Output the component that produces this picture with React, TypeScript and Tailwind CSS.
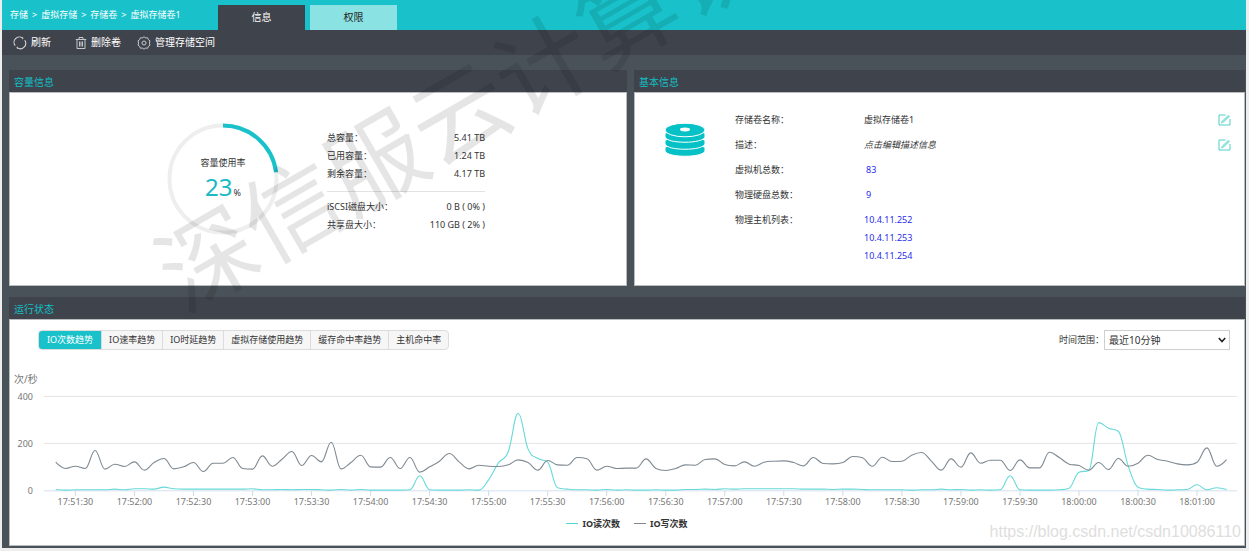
import { useState } from "react";
import type { ReactNode } from "react";

const WRITE = [
  247, 266, 259, 266, 212, 268, 253, 260, 246, 271, 248, 236, 267, 261, 248, 275, 250, 250, 233, 266,
  268, 228, 259, 238, 215, 257, 227, 246, 187, 267, 248, 226, 261, 262, 233, 266, 233, 277, 261, 244,
  221, 246, 267, 256, 259, 260, 255, 240, 248, 271, 242, 255, 256, 233, 237, 271, 259, 266, 265, 265,
  237, 266, 272, 266, 255, 256, 239, 237, 254, 258, 246, 259, 247, 244, 243, 248, 258, 233, 251, 252,
  248, 230, 234, 259, 232, 245, 244, 226, 218, 244, 271, 237, 262, 219, 250, 241, 241, 272, 240, 264,
  264, 217, 233, 253, 257, 271, 248, 269, 236, 259, 250, 226, 239, 244, 252, 255, 247, 204, 259, 239,
];

const READ = [
  329, 331, 330, 330, 330, 330, 328, 330, 327, 327, 328, 322, 327, 328, 328, 328, 328, 328, 328, 328,
  327, 330, 330, 329, 330, 329, 329, 330, 331, 329, 331, 329, 331, 331, 331, 331, 330, 288, 330, 331,
  331, 331, 330, 331, 300, 249, 215, 100, 207, 236, 247, 324, 328, 330, 330, 331, 329, 331, 330, 331,
  331, 330, 331, 331, 329, 329, 328, 329, 327, 328, 327, 327, 327, 327, 327, 327, 328, 328, 328, 329,
  328, 328, 329, 330, 330, 330, 330, 331, 330, 330, 328, 330, 329, 331, 330, 331, 330, 288, 330, 331,
  331, 331, 330, 325, 277, 272, 128, 145, 154, 258, 322, 328, 329, 331, 330, 329, 315, 330, 324, 329,
];

const TIMES = [
  "17:51:30", "17:52:00", "17:52:30", "17:53:00", "17:53:30", "17:54:00", "17:54:30",
  "17:55:00", "17:55:30", "17:56:00", "17:56:30", "17:57:00", "17:57:30", "17:58:00",
  "17:58:30", "17:59:00", "17:59:30", "18:00:00", "18:00:30", "18:01:00",
];

const STEP = 9.855;

// Smoothed line whose control points never overshoot a neighbouring sample.
function spline(values: number[]) {
  const pts = values.map((v, i) => ({ x: 45.8 + STEP * i, y: v / 3 + 10 }));
  let d = `M${pts[0].x} ${pts[0].y}`;
  let right = { ...pts[0] };
  for (let i = 1; i < pts.length; i++) {
    const last = pts[i - 1];
    const p = pts[i];
    const next = pts[i + 1];
    let lx = p.x;
    let ly = p.y;
    let rx = p.x;
    let ry = p.y;
    if (next) {
      lx = (1.5 * p.x + last.x) / 2.5;
      ly = (1.5 * p.y + last.y) / 2.5;
      rx = (1.5 * p.x + next.x) / 2.5;
      ry = (1.5 * p.y + next.y) / 2.5;
      const fix = ((ry - ly) * (rx - p.x)) / (rx - lx) + p.y - ry;
      ly += fix;
      ry += fix;
      if (ly > last.y && ly > p.y) {
        ly = Math.max(last.y, p.y);
        ry = 2 * p.y - ly;
      } else if (ly < last.y && ly < p.y) {
        ly = Math.min(last.y, p.y);
        ry = 2 * p.y - ly;
      }
      if (ry > next.y && ry > p.y) {
        ry = Math.max(next.y, p.y);
        ly = 2 * p.y - ry;
      } else if (ry < next.y && ry < p.y) {
        ry = Math.min(next.y, p.y);
        ly = 2 * p.y - ry;
      }
    }
    d += `C${right.x} ${right.y} ${lx} ${ly} ${p.x} ${p.y}`;
    right = { x: rx, y: ry };
  }
  return d;
}

function Chart() {
  return (
    <svg viewBox="0 0 1236 142" className="block h-auto w-full" role="img" aria-label="IO次数趋势">
      {[400, 200, 0].map((v, i) => (
        <g key={v}>
          <path d={`M34 ${26.5 + 47 * i + (i === 2 ? 0.5 : 0)}H1229`} stroke={v ? "#e4e4e4" : "#d4dfee"} fill="none" />
          <text x="23" y={30 + 47 * i} textAnchor="end" className="fill-[#777] text-[9px]">{v}</text>
        </g>
      ))}
      {TIMES.map((t, i) => (
        <g key={t}>
          <path d={`M${65.5 + STEP * 6 * i} 121v5`} stroke="#cfdaea" />
          <text x={65.5 + STEP * 6 * i} y="135" textAnchor="middle" className="fill-[#777] text-[9px]">{t}</text>
        </g>
      ))}
      <path d={spline(READ)} fill="none" stroke="#66d9d8" strokeWidth="1.1" />
      <path d={spline(WRITE)} fill="none" stroke="#7f8a93" strokeWidth="1.1" />
    </svg>
  );
}

function Panel({ title, children }: { title: string; children: ReactNode }) {
  return (
    <section className="flex min-w-0 flex-col">
      <h2 className="h-[22px] bg-[#3f434c] pl-[5px] text-[10px] leading-6 text-[#12bfc4]">{title}</h2>
      <div className="grow border border-[#b9bcbf] bg-white">{children}</div>
    </section>
  );
}

function RefreshIcon() {
  return (
    <svg viewBox="0 0 14 14" className="size-[14px]" fill="none" stroke="#d5d7d9" strokeWidth="1.1">
      <path d="M2.2 9.6A5.3 5.3 0 0 1 9.6 2.1M11.7 4.3A5.3 5.3 0 0 1 4.2 11.6" />
      <path d="M9.400 1.200l.8 1.200-1.200.6M4.600 12.800l-.8-1.200 1.200-.6" strokeWidth=".8" />
    </svg>
  );
}

function TrashIcon() {
  return (
    <svg viewBox="0 0 12 14" className="h-[14px] w-3" fill="none" stroke="#d5d7d9">
      <path d="M.8 3.5h10.4M4 3.3V1.5h4v1.8M2 3.7v8.8h8V3.7M4.5 5.5v5M6 5.5v5M7.5 5.5v5" strokeWidth=".9" />
    </svg>
  );
}

function GearIcon() {
  return (
    <svg viewBox="0 0 14 14" className="size-[14px]" fill="none" stroke="#d5d7d9" strokeWidth=".9">
      <path d="M7 .8l1.6 1.1 2-.1.8 1.8 1.6 1.3-.6 2.1.6 2.1-1.6 1.3-.8 1.8-2-.1L7 13.2l-1.6-1.1-2 .1-.8-1.8L1 9.1 1.6 7 1 4.9l1.6-1.3.8-1.8 2 .1z" />
      <circle cx="7" cy="7" r="2" />
    </svg>
  );
}

function EditIcon() {
  return (
    <svg viewBox="0 0 13 12" className="h-3 w-[13px]" fill="none">
      <path d="M7.500 1H1v10h11V5" stroke="#4fcfc9" />
      <path d="M3.200 9.200l1-2.200L10.200 1.200l1.600 1.200-6 5.700z" fill="#9be3df" stroke="#5ed2cd" strokeWidth=".5" />
    </svg>
  );
}

function DiskIcon() {
  return (
    <svg viewBox="0 0 40 34" className="h-[34px] w-10 shrink-0">
      <g fill="#06c1c5" stroke="#fff" strokeWidth="1">
        <path d="M0 24.5C3 21 37 21 40 24.5V28C38 35 2 35 0 28z" />
        <path d="M0 17.5C3 14 37 14 40 17.5V21C38 28 2 28 0 21z" />
        <path d="M0 10.500C3 7 37 7 40 10.500V14C38 21 2 21 0 14z" />
        <ellipse cx="20" cy="7" rx="20" ry="6.800" />
      </g>
      <ellipse cx="20" cy="6.500" rx="5" ry="1.900" fill="#fff" />
    </svg>
  );
}

function Stat({ label, value }: { label: string; value: string }) {
  return (
    <div className="flex justify-between">
      <dt>{label}</dt>
      <dd>{value}</dd>
    </div>
  );
}

function Row({ label, edit, children }: { label: string; edit?: string; children: ReactNode }) {
  return (
    <div className="flex items-start">
      <dt className="w-[129px] shrink-0">{label}</dt>
      <dd className="grow">{children}</dd>
      {edit && (
        <button type="button" aria-label={edit} className="mt-[3px]">
          <EditIcon />
        </button>
      )}
    </div>
  );
}

const TRENDS = ["IO次数趋势", "IO速率趋势", "IO时延趋势", "虚拟存储使用趋势", "缓存命中率趋势", "主机命中率"];

export default function App() {
  const [trend, setTrend] = useState(0);
  return (
    <div className="relative min-h-screen overflow-hidden bg-[#eeeeef] pr-[3px] pb-[3px] pl-[2px] font-['Noto_Sans','Noto_Sans_CJK_SC',sans-serif] text-[9px] text-[#333]">
      <div className="bg-[#4a5259]">
        <header className="flex h-[30px] items-end bg-[#19c2ca] text-white">
          <nav aria-label="路径" className="flex w-[216px] shrink-0 gap-1 self-center pl-2">
            <a href="#storage">存储</a>
            <span>&gt;</span>
            <a href="#virtual">虚拟存储</a>
            <span>&gt;</span>
            <a href="#volumes">存储卷</a>
            <span>&gt;</span>
            <a href="#volume1">虚拟存储卷1</a>
          </nav>
          <div className="flex gap-[5px] text-[10px]">
            <button type="button" className="h-[25px] w-[87px] bg-[#3f434c]">信息</button>
            <button type="button" className="h-[25px] w-[87px] bg-[#8be2e3] text-[#222]">权限</button>
          </div>
        </header>
        <div className="flex h-[25px] items-center bg-[#3f434c] pl-[11px] text-[10px] text-white">
          <button type="button" className="mr-6 flex items-center gap-1"><RefreshIcon />刷新</button>
          <button type="button" className="mr-4 flex items-center gap-1"><TrashIcon />删除卷</button>
          <button type="button" className="flex items-center gap-1"><GearIcon />管理存储空间</button>
        </div>

        <main className="flex flex-col gap-[11px] pt-[15px] pr-px pb-[2px] pl-[7px]">
          <div className="grid grid-cols-[618fr_611fr] gap-[7px]">
            <Panel title="容量信息">
              <div className="flex h-[192px] items-start pt-[30px] pl-[157px]">
                <div className="relative size-[112px] shrink-0">
                  <svg viewBox="0 0 112 112" className="size-full" fill="none" strokeWidth="4">
                    <circle cx="56" cy="56" r="53.500" stroke="#eeeeee" />
                    <circle cx="56" cy="56" r="53.500" stroke="#19c2ca" pathLength="100" strokeDasharray="23 77" transform="rotate(-90 56 56)" />
                  </svg>
                  <div className="absolute inset-0 flex flex-col items-center pt-8">
                    <span className="leading-4">容量使用率</span>
                    <span className="flex items-baseline gap-px leading-8">
                      <span className="text-[24px] text-[#19b9c6]">23</span>
                      <span>%</span>
                    </span>
                  </div>
                </div>
                <dl className="ml-12 w-[158px] pt-[6px] leading-[18px]">
                  <Stat label="总容量：" value="5.41 TB" />
                  <Stat label="已用容量：" value="1.24 TB" />
                  <Stat label="剩余容量：" value="4.17 TB" />
                  <div className="mt-2 border-t border-[#e2e2e2] pt-[6px]">
                    <Stat label="iSCSI磁盘大小：" value="0 B ( 0% )" />
                    <Stat label="共享盘大小：" value="110 GB ( 2% )" />
                  </div>
                </dl>
              </div>
            </Panel>
            <Panel title="基本信息">
              <div className="flex items-start pt-[18px] pr-[13px] pl-[30px]">
                <div className="pt-3"><DiskIcon /></div>
                <dl className="ml-[30px] flex grow flex-col gap-[7px] leading-[18px]">
                  <Row label="存储卷名称：" edit="编辑名称">虚拟存储卷1</Row>
                  <Row label="描述：" edit="编辑描述"><i>点击编辑描述信息</i></Row>
                  <Row label="虚拟机总数："><a href="#vms" className="pl-[2px] text-[#2a2af0]">83</a></Row>
                  <Row label="物理硬盘总数："><a href="#disks" className="pl-[2px] text-[#2a2af0]">9</a></Row>
                  <Row label="物理主机列表：">
                    <div className="flex flex-col items-start text-[#2a2af0]">
                      <a href="#host252">10.4.11.252</a>
                      <a href="#host253">10.4.11.253</a>
                      <a href="#host254">10.4.11.254</a>
                    </div>
                  </Row>
                </dl>
              </div>
            </Panel>
          </div>

          <Panel title="运行状态">
            <div className="flex items-center justify-between pt-[10px] pr-[14px] pl-7">
              <div className="flex h-5 overflow-hidden rounded-[4px] border border-[#dcdcdc] bg-[#f6f6f6]">
                {TRENDS.map((t, i) => (
                  <button
                    key={t}
                    type="button"
                    onClick={() => setTrend(i)}
                    className={
                      i === trend
                        ? "bg-[#19c2ca] px-2 text-white"
                        : "border-l border-[#dcdcdc] px-[7px]"
                    }
                  >
                    {t}
                  </button>
                ))}
              </div>
              <div className="flex items-center">
                <label htmlFor="range">时间范围：</label>
                <div className="relative">
                  <select id="range" className="block h-5 w-[126px] appearance-none border border-[#cfcfcf] bg-white pl-1 text-[10px]">
                    <option>最近10分钟</option>
                  </select>
                  <svg viewBox="0 0 8 6" className="pointer-events-none absolute top-[7px] right-1 h-[6px] w-2" fill="none" stroke="#222" strokeWidth="1.600">
                    <path d="M.8 1L4 4.500 7.200 1" />
                  </svg>
                </div>
              </div>
            </div>
            <p className="pt-[21px] pl-1 text-[10px] leading-4 text-[#777]">次/秒</p>
            <div className="-mt-[17px]"><Chart /></div>
            <div className="flex h-[33px] items-start justify-center gap-[14px] pt-1 font-bold leading-4">
              <span className="flex items-center gap-1"><i className="h-px w-3 bg-[#4fd3d3]" />IO读次数</span>
              <span className="flex items-center gap-1"><i className="h-px w-3 bg-[#7f8a93]" />IO写次数</span>
            </div>
          </Panel>
        </main>
      </div>
      <div className="pointer-events-none absolute top-[199px] left-[158px] origin-[48px_50%] -rotate-30 whitespace-nowrap text-[97px] leading-[116px] text-black/10">
        深信服云计算认证
      </div>
      <div className="pointer-events-none absolute right-2 bottom-[9px] font-['Liberation_Sans',sans-serif] text-[16px] leading-5 text-[#dedede]">
        https://blog.csdn.net/csdn10086110
      </div>
    </div>
  );
}
